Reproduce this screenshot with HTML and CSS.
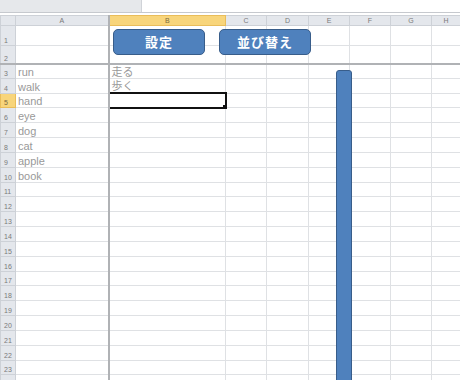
FILE: index.html
```html
<!DOCTYPE html>
<html lang="ja">
<head>
  <meta charset="UTF-8">
  <title>Sheet1</title>
  <link rel="stylesheet" href="styles.css">
</head>
<body>
  <div class="sheet">
    <div class="formula-bar">
      <div class="name-box"></div>
      <div class="formula"></div>
    </div>

    <table class="grid">
      <colgroup>
        <col class="c-row"><col class="c-a"><col class="c-b"><col class="c-c"><col class="c-d"><col class="c-e"><col class="c-f"><col class="c-g"><col class="c-h">
      </colgroup>
      <tr class="head">
        <th class="corner"></th><th class="fz-col">A</th><th class="on">B</th><th>C</th><th>D</th><th>E</th><th>F</th><th>G</th><th>H</th>
      </tr>
      <tr class="r1"><th>1</th><td class="fz-col"></td><td></td><td></td><td></td><td></td><td></td><td></td><td></td></tr>
      <tr class="r2 fz-row"><th>2</th><td class="fz-col"></td><td></td><td></td><td></td><td></td><td></td><td></td><td></td></tr>
      <tr><th>3</th><td class="fz-col">run</td><td>走る</td><td></td><td></td><td></td><td></td><td></td><td></td></tr>
      <tr><th>4</th><td class="fz-col">walk</td><td>歩く</td><td></td><td></td><td></td><td></td><td></td><td></td></tr>
      <tr><th class="on">5</th><td class="fz-col">hand</td><td class="active"><span class="handle"></span></td><td></td><td></td><td></td><td></td><td></td><td></td></tr>
      <tr><th>6</th><td class="fz-col">eye</td><td></td><td></td><td></td><td></td><td></td><td></td><td></td></tr>
      <tr><th>7</th><td class="fz-col">dog</td><td></td><td></td><td></td><td></td><td></td><td></td><td></td></tr>
      <tr><th>8</th><td class="fz-col">cat</td><td></td><td></td><td></td><td></td><td></td><td></td><td></td></tr>
      <tr><th>9</th><td class="fz-col">apple</td><td></td><td></td><td></td><td></td><td></td><td></td><td></td></tr>
      <tr><th>10</th><td class="fz-col">book</td><td></td><td></td><td></td><td></td><td></td><td></td><td></td></tr>
      <tr><th>11</th><td class="fz-col"></td><td></td><td></td><td></td><td></td><td></td><td></td><td></td></tr>
      <tr><th>12</th><td class="fz-col"></td><td></td><td></td><td></td><td></td><td></td><td></td><td></td></tr>
      <tr><th>13</th><td class="fz-col"></td><td></td><td></td><td></td><td></td><td></td><td></td><td></td></tr>
      <tr><th>14</th><td class="fz-col"></td><td></td><td></td><td></td><td></td><td></td><td></td><td></td></tr>
      <tr><th>15</th><td class="fz-col"></td><td></td><td></td><td></td><td></td><td></td><td></td><td></td></tr>
      <tr><th>16</th><td class="fz-col"></td><td></td><td></td><td></td><td></td><td></td><td></td><td></td></tr>
      <tr><th>17</th><td class="fz-col"></td><td></td><td></td><td></td><td></td><td></td><td></td><td></td></tr>
      <tr><th>18</th><td class="fz-col"></td><td></td><td></td><td></td><td></td><td></td><td></td><td></td></tr>
      <tr><th>19</th><td class="fz-col"></td><td></td><td></td><td></td><td></td><td></td><td></td><td></td></tr>
      <tr><th>20</th><td class="fz-col"></td><td></td><td></td><td></td><td></td><td></td><td></td><td></td></tr>
      <tr><th>21</th><td class="fz-col"></td><td></td><td></td><td></td><td></td><td></td><td></td><td></td></tr>
      <tr><th>22</th><td class="fz-col"></td><td></td><td></td><td></td><td></td><td></td><td></td><td></td></tr>
      <tr><th>23</th><td class="fz-col"></td><td></td><td></td><td></td><td></td><td></td><td></td><td></td></tr>
      <tr><th></th><td class="fz-col"></td><td></td><td></td><td></td><td></td><td></td><td></td><td></td></tr>
    </table>

    <!-- shapes floating over the sheet -->
    <button class="shape btn-settings">設定</button>
    <button class="shape btn-sort">並び替え</button>
    <div class="shape bar"></div>
  </div>
</body>
</html>
```

FILE: styles.css
```css
body { margin: 0; background: #fff; overflow: hidden; }
.sheet { position: relative; width: 460px; height: 380px; overflow: hidden; font-family: "Liberation Sans", "Noto Sans CJK JP", sans-serif; }

.formula-bar { display: flex; height: 12px; border-bottom: 1px solid #c6c9ce; margin-bottom: 2px; }
.name-box { width: 141px; background: #e6e8eb; border-right: 1px solid #d0d3d8; }
.formula { flex: 1; background: #fff; }

.grid { border-collapse: collapse; table-layout: fixed; width: 460px; }
.c-row { width: 15px; }
.c-a { width: 93px; }
.c-b { width: 117px; }
.c-c { width: 41px; }
.c-d { width: 42px; }
.c-e, .c-f, .c-g { width: 41px; }
.c-h { width: 29px; }

.grid th { background: #e4e7ec; color: #7a7a7a; font-weight: normal; font-size: 7px; border: 1px solid #cdd1d7; padding: 0; overflow: hidden; }
.grid tr > th:first-child { text-align: left; padding-left: 3px; vertical-align: bottom; line-height: 9px; }
.grid .head { height: 10px; }
.grid .head th { text-align: center; vertical-align: middle; line-height: 8px; padding-left: 0; }
.grid .head th.corner { background: #e4e7ec; }
.grid th.on { background: #f8d57b; color: #7a6a40; border-color: #e9bd5a; }

.grid tr { height: 14.84px; }
.grid .r1 { height: 20px; }
.grid .r2 { height: 18px; }

.grid td { border: 1px solid #dfe1e4; padding: 0 0 0 2px; font-size: 11px; line-height: 12px; color: #999; white-space: nowrap; overflow: hidden; vertical-align: bottom; }
.grid .fz-col { border-right: 2px solid #b0b2b5; }
.grid .fz-row td, .grid .fz-row th { border-bottom: 2px solid #b0b2b5; }

.grid td.active { position: relative; border: 2px solid #111; }
.handle { position: absolute; right: -3px; bottom: -3px; width: 4px; height: 4px; background: #111; border: 1px solid #fff; }

.shape { position: absolute; background: #4f81bd; border: 1.5px solid #385d8a; box-sizing: border-box; }
.btn-settings, .btn-sort { top: 29px; height: 26px; border-radius: 5px; color: #fff; font-family: "Noto Sans CJK JP", sans-serif; font-weight: bold; font-size: 13px; line-height: 22px; padding: 0; letter-spacing: 1px; }
.btn-settings { left: 113px; width: 92px; }
.btn-sort { left: 219px; width: 92px; }
.bar { left: 336px; top: 70px; width: 16px; height: 330px; border-radius: 3px 3px 0 0; }
```
